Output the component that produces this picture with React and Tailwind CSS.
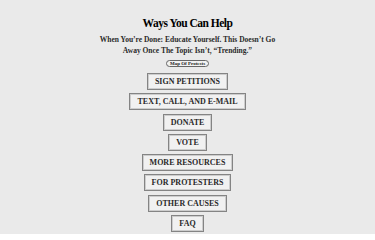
const LINKS = [
  'SIGN PETITIONS',
  'TEXT, CALL, AND E-MAIL',
  'DONATE',
  'VOTE',
  'MORE RESOURCES',
  'FOR PROTESTERS',
  'OTHER CAUSES',
  'FAQ',
];

export default function App() {
  return (
    <div className="min-h-[234px] bg-[#eaeaea] text-[#111] font-[Liberation_Serif,Times_New_Roman,serif] flex flex-col items-center pt-[16px]">
      <h1 className="text-[11.5px] font-bold leading-[14px] tracking-[-0.5px] text-black">Ways You Can Help</h1>
      <p className="mt-[5px] text-[7.5px] leading-[10.5px] text-center w-[180px] font-bold text-[#2a2a2a]">
        When You’re Done: Educate Yourself. This Doesn’t Go Away Once The Topic Isn’t, “Trending.”
      </p>
      <button className="mt-[4px] px-[3px] h-[7px] rounded-full border border-[#666] bg-[#f2f2f2] text-[5px] leading-[5px] font-bold text-[#222] font-[Liberation_Serif,Times_New_Roman,serif]">
        Map Of Protests
      </button>
      <div className="mt-[6px] flex flex-col items-center gap-[3.3px]">
        {LINKS.map(label => (
          <button
            key={label}
            className="h-[17px] px-[7px] border border-[#848484] shadow-[inset_0_0_0_1px_#cdcdcd] bg-[#f1f1f1] text-[8px] leading-[15px] font-bold text-[#2a2a2a] font-[Liberation_Serif,Times_New_Roman,serif]"
          >
            {label}
          </button>
        ))}
      </div>
    </div>
  );
}
